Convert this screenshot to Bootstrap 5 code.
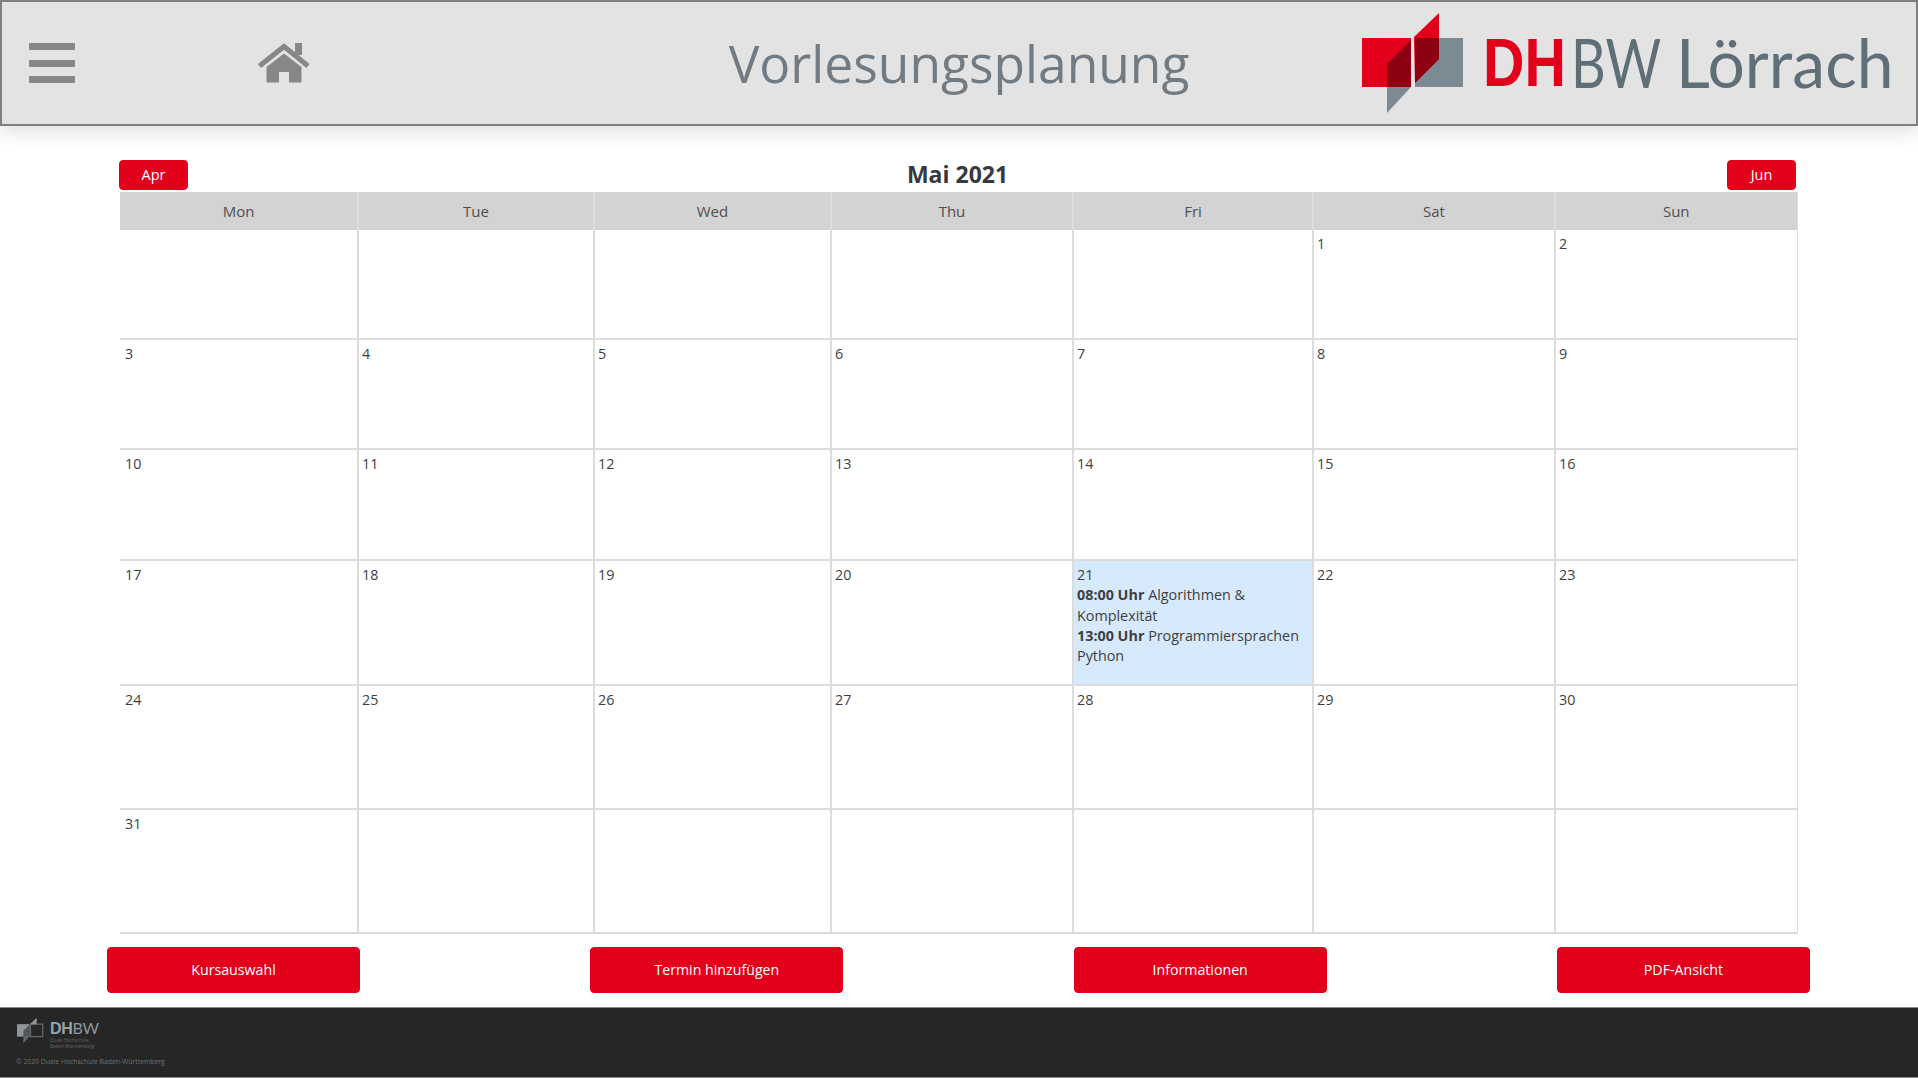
<!doctype html>
<html lang="de">
<head>
<meta charset="utf-8">
<title>Vorlesungsplanung</title>
<link rel="stylesheet" href="https://cdn.jsdelivr.net/npm/bootstrap@5.3.0/dist/css/bootstrap.min.css">
<style>
body{font-family:"Open Sans","Noto Sans",sans-serif;color:#3f3f3f;background:#fff;overflow:hidden;height:1080px}
.top-bar{height:126px;background:#e3e3e3;border:2px solid #7f7f7f;box-shadow:0 6px 18px rgba(0,0,0,.13);position:relative}
.burger{width:46px;height:40px;margin-left:27px}
.burger i{display:block;height:7px;background:#878787;border-radius:1px}
.home-ico{width:53px;height:40px;margin-left:182px;display:block}
.page-title{position:absolute;left:0;right:0;top:27px;text-align:center;font-size:51.500px;line-height:68px;color:#737b82;margin:0;font-weight:400}
.brand-wrap{margin-left:auto;margin-right:27px;gap:15px}
.brand-mark{width:110px;height:106px;display:block}
.brand-text{font-family:Lato,"Open Sans",sans-serif;font-size:68px;line-height:68px;color:#5f6f78;white-space:nowrap;font-weight:400;margin-top:-2px}
.brand-text span{display:block;transform-origin:left center}
.bt-dh{width:88px;transform:scaleX(.845);color:#e2001a;font-family:"Liberation Sans",sans-serif;font-weight:700}
.bt-bw{width:105px;transform:scaleX(.79)}
.bt-lo{width:213px;transform:scaleX(.97)}
.cal-wrap{margin:31px 122px 0 119px;height:35px}
.btn-dh,.btn-dh:hover{background:#e2001a;color:#fff;border:1px solid #e2001a}
.nav-btn{height:30px;padding:0;font-size:14.500px;line-height:28px;border-radius:4px}
.nav-apr{width:69px}
.nav-jun{width:69px}
.month{font-size:23px;font-weight:700;color:#343a40;line-height:33px;margin:0}
.cal-table{table-layout:fixed;width:1677px;margin:0 0 0 120px;border-collapse:collapse;font-size:14.350px;line-height:20.300px;color:#3f3f3f}
.cal-table th{background:#d3d3d3;height:38px;padding:0;text-align:center;font-weight:400;font-size:15px;color:#4f4f4f;border:2px solid #dcdcdc;border-width:0 2px 0 0;vertical-align:middle}
.cal-table td{padding:4px 3px 3px;vertical-align:top;border:2px solid #dcdcdc;border-top:0}
.cal-table td:first-child{border-left:0;padding-left:5px}
.cal-table td:last-child,.cal-table th:last-child{border-right:1px solid #dcdcdc}
.r1{height:109px}.r2{height:110px}.r3{height:111px}.r4{height:125px}.r4b{height:124px}.r5{height:124px}
.sel-day{background:#d6e9fd}
.action-row{padding:13px 108px 0 107px}
.act-btn{width:253px;height:46px;padding:0;font-size:14.200px;line-height:44px;border-radius:4px}
.foot-bar{height:71px;margin-top:14px;background:#262626;border-top:1px solid #8a8a8a;border-bottom:1px solid #8a8a8a;padding:9px 16px 0;color:#777}
.foot-mark{width:28px;height:27px;display:block;margin-right:2px}
.foot-name{font-family:Lato,"Open Sans",sans-serif;font-size:16px;line-height:17px;color:#8d979d;letter-spacing:-.3px;margin-top:2px}
.foot-name b{font-family:"Liberation Sans",sans-serif;font-weight:700;color:#98a3aa}
.foot-sub{font-size:4.600px;line-height:5.600px;color:#666;margin-top:1px}
.foot-copy{font-size:6.800px;line-height:9px;color:#707070;margin-top:8px}
</style>
</head>
<body>
<header class="top-bar d-flex align-items-center">
  <div class="burger d-flex flex-column justify-content-between" aria-label="Menü"><i></i><i></i><i></i></div>
  <svg class="home-ico" viewBox="0 0 53 40" aria-label="Startseite">
    <path d="M2.5 23 27 3.5 51 23" fill="none" stroke="#878787" stroke-width="5" stroke-linejoin="miter"/>
    <rect x="38" y="0" width="7" height="12" fill="#878787"/>
    <path d="M9.5 24 27 10.500 44.500 24V39.500H32V29H22V39.500H9.500Z" fill="#878787"/>
  </svg>
  <h1 class="page-title">Vorlesungsplanung</h1>
  <div class="brand-wrap d-flex align-items-center">
    <svg class="brand-mark" viewBox="1358 10 110 106" aria-label="DHBW Logo">
      <rect x="1362" y="38" width="49" height="49" fill="#e2001a"/>
      <rect x="1415" y="38" width="48" height="49" fill="#7c8b93"/>
      <path d="M1414 37 1439 13V59L1415 83Z" fill="#e2001a"/>
      <path d="M1415 38H1439V59L1415 83Z" fill="#8c0012"/>
      <path d="M1387 64 1411 40V87H1387Z" fill="#8c0012"/>
      <path d="M1387 87H1411L1387 113Z" fill="#7c8b93"/>
    </svg>
    <div class="brand-text d-flex"><span class="bt-dh">DH</span><span class="bt-bw">BW</span><span class="bt-lo">Lörrach</span></div>
  </div>
</header>

<div class="cal-wrap d-flex justify-content-between align-items-center">
  <button class="btn btn-dh nav-btn nav-apr" type="button">Apr</button>
  <h2 class="month">Mai 2021</h2>
  <button class="btn btn-dh nav-btn nav-jun" type="button">Jun</button>
</div>

<table class="cal-table">
  <colgroup><col style="width:238px"><col style="width:236px"><col style="width:237px"><col style="width:242px"><col style="width:240px"><col style="width:242px"><col style="width:242px"></colgroup>
  <thead><tr><th>Mon</th><th>Tue</th><th>Wed</th><th>Thu</th><th>Fri</th><th>Sat</th><th>Sun</th></tr></thead>
  <tbody>
    <tr class="r1"><td></td><td></td><td></td><td></td><td></td><td>1</td><td>2</td></tr>
    <tr class="r2"><td>3</td><td>4</td><td>5</td><td>6</td><td>7</td><td>8</td><td>9</td></tr>
    <tr class="r3"><td>10</td><td>11</td><td>12</td><td>13</td><td>14</td><td>15</td><td>16</td></tr>
    <tr class="r4"><td>17</td><td>18</td><td>19</td><td>20</td><td class="sel-day">21<br><strong>08:00 Uhr</strong> Algorithmen &amp;<br>Komplexität<br><strong>13:00 Uhr</strong> Programmiersprachen<br>Python</td><td>22</td><td>23</td></tr>
    <tr class="r4b"><td>24</td><td>25</td><td>26</td><td>27</td><td>28</td><td>29</td><td>30</td></tr>
    <tr class="r5"><td>31</td><td></td><td></td><td></td><td></td><td></td><td></td></tr>
  </tbody>
</table>

<div class="action-row d-flex justify-content-between">
  <button class="btn btn-dh act-btn" type="button">Kursauswahl</button>
  <button class="btn btn-dh act-btn" type="button">Termin hinzufügen</button>
  <button class="btn btn-dh act-btn" type="button">Informationen</button>
  <button class="btn btn-dh act-btn" type="button">PDF-Ansicht</button>
</div>

<footer class="foot-bar">
  <div class="d-flex gap-1">
    <svg class="foot-mark" viewBox="1358 10 110 106" aria-label="DHBW Logo">
      <rect x="1362" y="38" width="49" height="49" fill="#8d979d"/>
      <rect x="1415" y="38" width="48" height="49" fill="none" stroke="#666" stroke-width="5"/>
      <path d="M1414 37 1439 13V38H1414Z" fill="#8d979d"/>
      <path d="M1387 64 1411 40V87H1387Z" fill="#555"/>
      <path d="M1387 87H1411L1387 113Z" fill="#666"/>
    </svg>
    <div>
      <div class="foot-name"><b>DH</b>BW</div>
      <div class="foot-sub">Duale Hochschule<br>Baden-Württemberg</div>
    </div>
  </div>
  <div class="foot-copy">© 2020 Duale Hochschule Baden-Württemberg</div>
</footer>
<script src="https://cdn.jsdelivr.net/npm/bootstrap@5.3.0/dist/js/bootstrap.bundle.min.js"></script>
</body>
</html>
